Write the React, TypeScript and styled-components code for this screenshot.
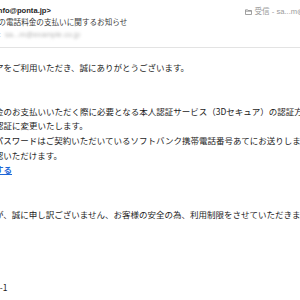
import React from "react";
import styled, { createGlobalStyle } from "styled-components";

const GlobalStyle = createGlobalStyle`
  html, body {
    margin: 0;
    padding: 0;
    background: #ffffff;
  }
  body {
    width: 300px;
    height: 300px;
    overflow: hidden;
  }
`;

const Viewport = styled.div`
  width: 300px;
  height: 300px;
  overflow: hidden;
  background: #ffffff;
`;

const MailWindow = styled.div`
  margin-left: -47.5px;
  width: 420px;
  font-family: "Liberation Sans", "Noto Sans CJK JP", sans-serif;
`;

const Header = styled.header`
  display: flex;
  justify-content: space-between;
  align-items: flex-start;
  padding: 5px 27.5px 6px 15.5px;
  border-bottom: 1px solid #e3e3e3;
  font-size: 7.6px;
  line-height: 12px;
`;

const HeaderInfo = styled.div`
  display: flex;
  flex-direction: column;
  white-space: nowrap;
`;

const Sender = styled.div`
  font-weight: bold;
  color: #262626;
`;

const Subject = styled.div`
  color: #3a3a3a;
`;

const Recipient = styled.div`
  display: flex;
  align-items: center;
`;

const RecipientLabel = styled.span`
  width: 33px;
  padding-right: 4px;
  text-align: right;
  color: #9a9a9a;
  box-sizing: content-box;
`;

const Blurred = styled.span`
  color: #b4b4b4;
  filter: blur(1.4px);
`;

const Mailbox = styled.div`
  display: flex;
  align-items: center;
  gap: 2.5px;
  width: 100px;
  margin-top: 1px;
  color: #9b9b9b;
  white-space: nowrap;
  overflow: hidden;
`;

const Body = styled.main`
  padding-top: 11.6px;
  font-family: "Noto Sans CJK JP", "Liberation Sans", sans-serif;
  font-size: 8.5px;
  line-height: 14.7px;
  color: #1c1c1c;
`;

const Line = styled.div`
  white-space: nowrap;
  min-height: 14.7px;
`;

const Link = styled.a`
  color: #1d66d6;
  font-weight: 600;
  text-decoration: underline;
`;

const FolderIcon = () => (
  <svg width="7" height="6" viewBox="0 0 7 6" aria-hidden="true">
    <path
      d="M0.5 0.8 H2.6 L3.1 1.5 H6.5 V5.5 H0.5 Z M0.5 2.2 H6.5"
      fill="none"
      stroke="#8a8a8a"
      strokeWidth="0.8"
    />
  </svg>
);

const lines: React.ReactNode[] = [
  "いつもストアをご利用いただき、誠にありがとうございます。",
  "",
  "",
  "携帯電話料金のお支払いいただく際に必要となる本人認証サービス（3Dセキュア）の認証方",
  "法をＳＭＳ認証に変更いたします。",
  "ワンタイムパスワードはご契約いただいているソフトバンク携帯電話番号あてにお送りします。",
  "すぐにご確認いただけます。",
  <Link href="#">今すぐ認証する</Link>,
  "",
  "",
  "ご不便ですが、誠に申し訳ございません、お客様の安全の為、利用制限をさせていただきます。",
  "",
  "",
  "",
  "",
  "東京都港区1-1",
];

export default function App() {
  return (
    <Viewport>
      <GlobalStyle />
      <MailWindow>
        <Header>
          <HeaderInfo>
            <Sender>Ponta &lt;info@ponta.jp&gt;</Sender>
            <Subject>お客さまの電話料金の支払いに関するお知らせ</Subject>
            <Recipient>
              <RecipientLabel>宛先:</RecipientLabel>
              <Blurred>sa...m@example.co.jp</Blurred>
            </Recipient>
          </HeaderInfo>
          <Mailbox>
            <FolderIcon />
            <span>受信 - sa...m@gmail.com</span>
          </Mailbox>
        </Header>
        <Body>
          {lines.map((content, i) => (
            <Line key={i}>{content}</Line>
          ))}
        </Body>
      </MailWindow>
    </Viewport>
  );
}
